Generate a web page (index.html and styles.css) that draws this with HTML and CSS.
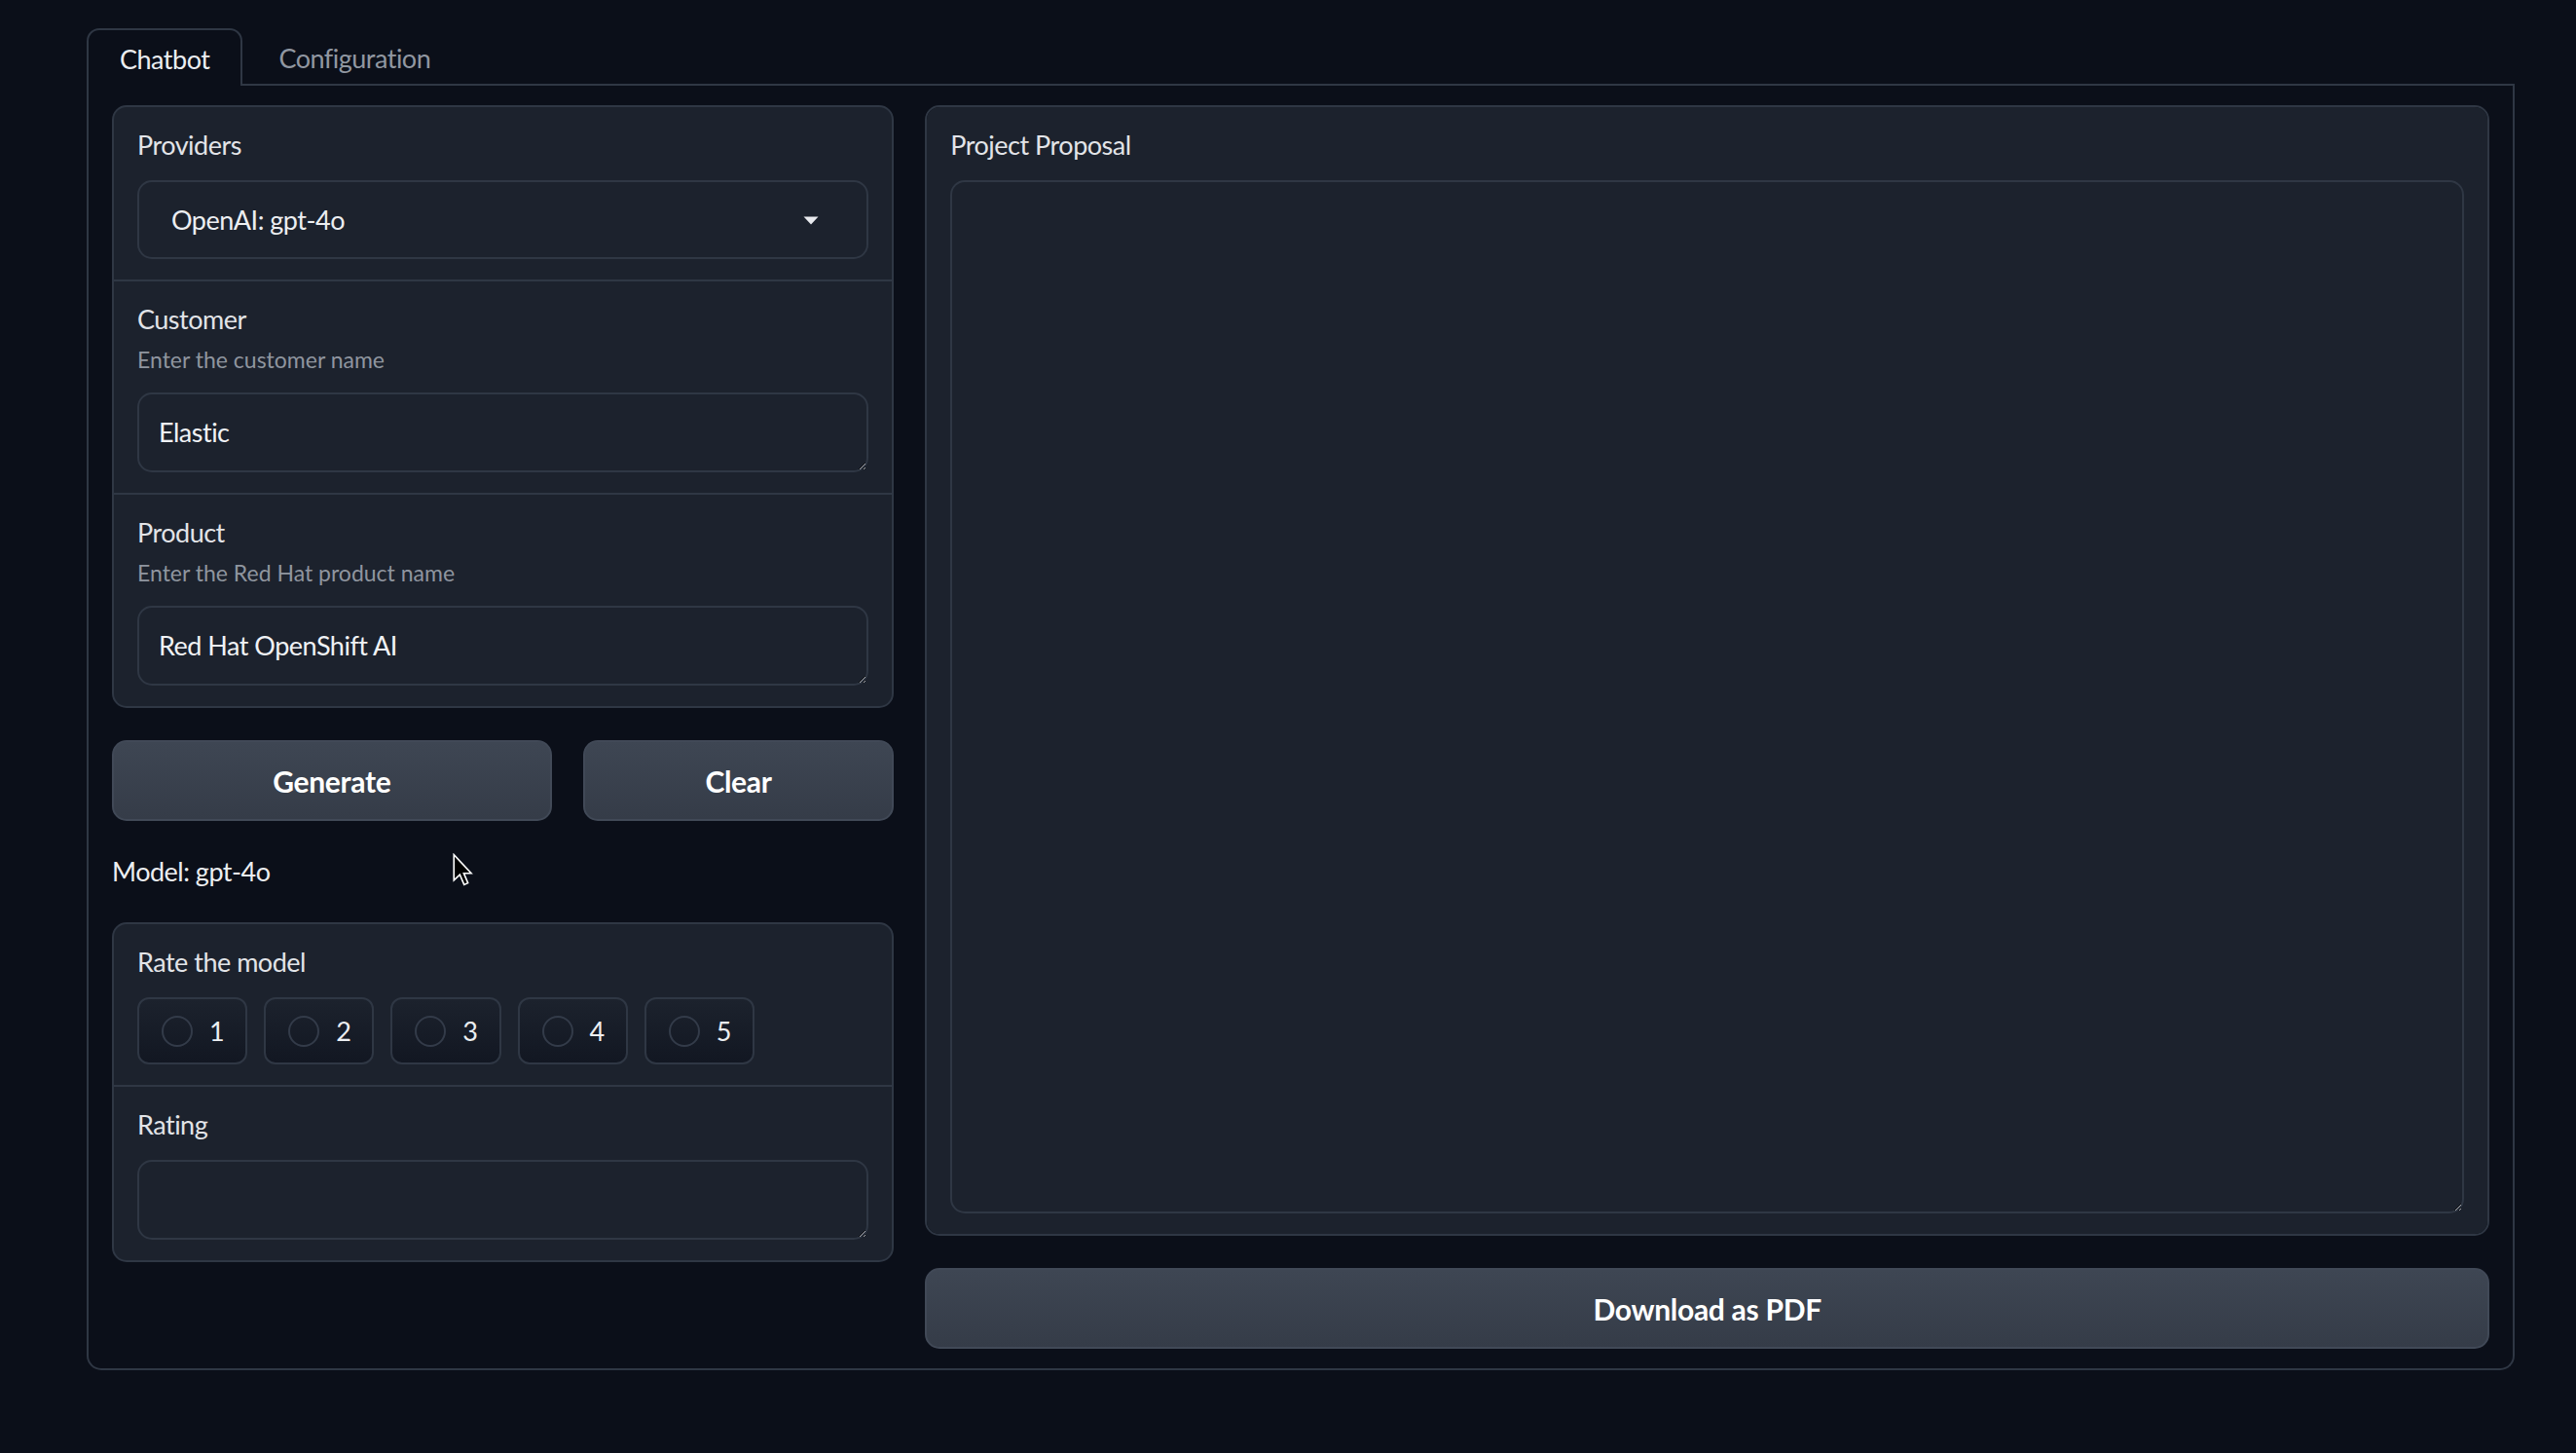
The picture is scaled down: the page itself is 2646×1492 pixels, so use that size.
FILE: index.html
```html
<!DOCTYPE html>
<html lang="en">
<head>
<meta charset="utf-8">
<title>Chatbot</title>
<link rel="stylesheet" href="styles.css">
</head>
<body>
<div class="app">
  <div class="tab-nav">
    <div class="tab selected">Chatbot</div>
    <div class="tab">Configuration</div>
  </div>
  <div class="panel">
    <div class="col col-left">
      <div class="form">
        <div class="block">
          <div class="head"><span class="label">Providers</span></div>
          <div class="dropdown">
            <span class="dd-value">OpenAI: gpt-4o</span>
            <svg class="dd-arrow" width="16" height="9" viewBox="0 0 16 9"><path d="M0.5 0.5 H15.5 L8 8.5 Z" fill="#e8eaee"/></svg>
          </div>
        </div>
        <div class="block">
          <div class="head"><span class="label">Customer</span><span class="info">Enter the customer name</span></div>
          <textarea class="input" rows="1">Elastic</textarea>
        </div>
        <div class="block">
          <div class="head"><span class="label">Product</span><span class="info">Enter the Red Hat product name</span></div>
          <textarea class="input" rows="1">Red Hat OpenShift AI</textarea>
        </div>
      </div>
      <div class="btn-row">
        <button class="btn btn-gen">Generate</button>
        <button class="btn btn-clear">Clear</button>
      </div>
      <div class="md">Model: gpt-4o</div>
      <div class="form">
        <div class="block">
          <div class="head"><span class="label">Rate the model</span></div>
          <div class="radios">
            <label class="radio"><span class="circle"></span><span>1</span></label>
            <label class="radio"><span class="circle"></span><span>2</span></label>
            <label class="radio"><span class="circle"></span><span>3</span></label>
            <label class="radio"><span class="circle"></span><span>4</span></label>
            <label class="radio"><span class="circle"></span><span>5</span></label>
          </div>
        </div>
        <div class="block">
          <div class="head"><span class="label">Rating</span></div>
          <textarea class="input" rows="1"></textarea>
        </div>
      </div>
    </div>
    <div class="col col-right">
      <div class="form">
        <div class="block">
          <div class="head"><span class="label">Project Proposal</span></div>
          <textarea class="input input-big"></textarea>
        </div>
      </div>
      <button class="btn btn-wide">Download as PDF</button>
    </div>
  </div>
</div>
<svg class="cursor" width="22" height="35" viewBox="0 0 18 28"><path d="M1 1 L1 22.5 L6 17.8 L9.6 26.2 L12.8 24.8 L9.3 16.6 L15.6 16.6 Z" fill="#000" stroke="#fff" stroke-width="1.3" stroke-linejoin="miter"/></svg>
</body>
</html>
```
FILE: styles.css
```css
html, body {
  margin: 0;
  padding: 0;
  background: #0b0f19;
}
body {
  font-family: Lato, "Noto Sans", sans-serif;
  color: #e4e6ea;
  min-height: 1492px;
  letter-spacing: -0.5px;
}
.app {
  width: 2494px;
  padding: 29px 0 0 89px;
}
.tab-nav {
  display: flex;
  gap: 3px;
  border-bottom: 2px solid #2f3744;
}
.tab {
  height: 57px;
  padding: 0 32px;
  display: flex;
  align-items: center;
  font-size: 27px;
  color: #9197a1;
  border: 2px solid transparent;
  border-bottom: 0;
  margin-bottom: -2px;
  border-radius: 13px 13px 0 0;
}
.tab.selected {
  color: #eceef1;
  border-color: #2f3744;
  background: #0b0f19;
  height: 59px;
  box-sizing: border-box;
  padding-top: 2px;
}
.panel {
  display: flex;
  align-items: flex-start;
  gap: 32px;
  padding: 20px 24px 20px 24px;
  border: 2px solid #2f3744;
  border-top: 0;
  border-radius: 0 0 15px 15px;
}
.col {
  display: flex;
  flex-direction: column;
  gap: 33px;
  min-width: 0;
}
.col-left { flex: 1 1 0; }
.col-right { flex: 2 1 0; }
.form {
  display: flex;
  flex-direction: column;
  gap: 2px;
  background: #2f3744;
  border: 2px solid #2f3744;
  border-radius: 15px;
  overflow: hidden;
}
.block {
  background: #1c222d;
  padding: 21px 24px;
}
.head {
  display: flex;
  flex-direction: column;
  margin-bottom: 19px;
}
.label {
  font-size: 27px;
  line-height: 35px;
  color: #e2e4e8;
}
.info {
  font-size: 23px;
  line-height: 30px;
  margin-top: 9px;
  color: #8f959f;
  letter-spacing: 0;
}
.dropdown {
  height: 81px;
  box-sizing: border-box;
  border: 2px solid #2f3744;
  border-radius: 15px;
  display: flex;
  align-items: center;
  justify-content: space-between;
  padding: 0 49px 0 33px;
  font-size: 27px;
  color: #eceef1;
}
.dd-arrow {
  display: block;
  margin-top: 2px;
}
.input {
  display: block;
  width: 100%;
  box-sizing: border-box;
  height: 82px;
  margin: 0;
  padding: 20px 20px;
  border: 2px solid #2f3744;
  border-radius: 15px;
  background: #1c222d;
  color: #f0f2f5;
  font-family: Lato, "Noto Sans", sans-serif;
  font-size: 27px;
  line-height: 38px;
  letter-spacing: -0.5px;
  resize: vertical;
  outline: none;
  color-scheme: dark;
  overflow: hidden;
}
.input-big {
  height: 1061px;
}
.btn-row {
  display: flex;
  gap: 32px;
}
.btn {
  height: 83px;
  box-sizing: border-box;
  border: 2px solid #414957;
  border-radius: 15px;
  background: linear-gradient(180deg, #3e4653 0%, #353c48 100%);
  color: #ffffff;
  font-family: Lato, "Noto Sans", sans-serif;
  font-weight: 700;
  font-size: 30px;
  letter-spacing: -0.3px;
  padding: 0;
  margin: 0;
}
.btn-gen { flex: 451 1 0; }
.btn-clear { flex: 318 1 0; }
.btn-wide { width: 100%; }
.md {
  font-size: 27px;
  line-height: 38px;
  color: #eceef1;
}
.radios {
  display: flex;
  gap: 17px;
}
.radio {
  height: 69px;
  box-sizing: border-box;
  display: flex;
  align-items: center;
  gap: 17px;
  padding: 0 22px 0 23px;
  border: 2px solid #2f3744;
  border-radius: 12px;
  background: linear-gradient(180deg, #1c222d 0%, #121722 100%);
  font-size: 27px;
  color: #eceef1;
}
.circle {
  width: 32px;
  height: 32px;
  box-sizing: border-box;
  border: 2px solid #333b49;
  border-radius: 50%;
}
.cursor {
  position: absolute;
  left: 465px;
  top: 876px;
}
```
